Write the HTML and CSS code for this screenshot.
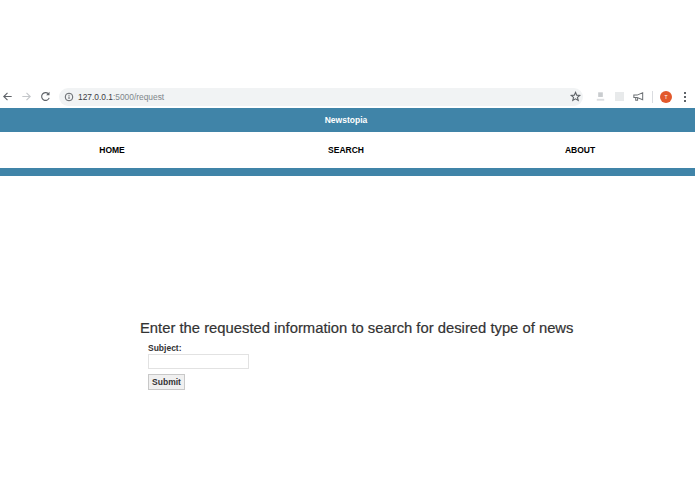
FILE: index.html
```html
<!DOCTYPE html>
<html lang="en">
<head>
<meta charset="UTF-8">
<meta name="viewport" content="width=device-width, initial-scale=1.0">
<title>Newstopia</title>
<link rel="stylesheet" href="styles.css">
</head>
<body>
<!-- browser toolbar -->
<div class="toolbar">
    <svg class="tool-icon" viewBox="0 0 14 14"><path d="M11.500 7H3M7 3L3 7l4 4" fill="none" stroke="#5f6368" stroke-width="1.200"/></svg>
    <svg class="tool-icon" viewBox="0 0 14 14"><path d="M2.500 7H11M7 3l4 4-4 4" fill="none" stroke="#c4c7ca" stroke-width="1.200"/></svg>
    <svg class="tool-icon" viewBox="0 0 14 14"><path d="M11 8.500A4.200 4.200 0 1 1 10 4" fill="none" stroke="#5f6368" stroke-width="1.200"/><path d="M11.300 2v3.600H7.700z" fill="#5f6368"/></svg>
    <div class="address-bar">
        <svg class="info-icon" viewBox="0 0 12 12"><circle cx="6" cy="6" r="3.800" fill="none" stroke="#5f6368" stroke-width="1"/><path d="M6 5.500v2.500M6 3.800v1" stroke="#5f6368" stroke-width="1"/></svg>
        <span class="url"><span class="url-host">127.0.0.1</span>:5000/request</span>
        <svg class="star-icon" viewBox="0 0 14 14"><path d="M7 2.500l1.300 3 3.300.3-2.500 2.200.8 3.200L7 9.500l-2.900 1.700.8-3.200-2.500-2.200 3.300-.3z" fill="none" stroke="#5f6368" stroke-width="1.200"/></svg>
    </div>
    <div class="extensions">
        <svg class="ext-icon" viewBox="0 0 14 14"><path d="M4.500 2.500h5v5h-5z" fill="#c9cccf"/><path d="M3 9.500h8v2H3z" fill="#dcdee0"/></svg>
        <span class="ext-square"></span>
        <svg class="ext-icon" viewBox="0 0 14 14"><path d="M2 5.500h3.500l6-2.500v7.500l-6-2.500H2zM4 8v3h2V8.500" fill="none" stroke="#6d7175" stroke-width="1.100"/></svg>
        <span class="divider"></span>
        <span class="avatar">T</span>
        <span class="kebab"><i></i><i></i><i></i></span>
    </div>
</div>

<header class="site-title">Newstopia</header>
<nav class="main-nav">
    <a href="#">HOME</a>
    <a href="#">SEARCH</a>
    <a href="#">ABOUT</a>
</nav>
<div class="nav-strip"></div>

<div class="content">
    <h2>Enter the requested information to search for desired type of news</h2>
    <form class="request-form" onsubmit="return false">
        <label for="subject">Subject:</label>
        <input type="text" id="subject">
        <input type="submit" value="Submit" class="submit-btn">
    </form>
</div>
</body>
</html>
```

FILE: styles.css
```css
body {
    margin: 0;
    padding-top: 85px;
    background-color: white;
    font-family: "Liberation Sans", Arial, sans-serif;
    color: #333333;
}
.toolbar {
    display: flex;
    align-items: center;
    height: 23px;
    padding-left: 1px;
}
.tool-icon {
    width: 13px;
    height: 13px;
    margin-right: 6px;
}
.address-bar {
    display: flex;
    align-items: center;
    flex: 1;
    height: 18px;
    margin-left: 1px;
    padding: 0 1px 0 4px;
    border-radius: 9px;
    background-color: #f1f3f4;
}
.info-icon {
    width: 12px;
    height: 12px;
    margin-right: 3px;
}
.url {
    flex: 1;
    font-size: 8.400px;
    color: #80868b;
}
.url-host {
    color: #3c4043;
}
.star-icon {
    width: 13px;
    height: 13px;
}
.extensions {
    display: flex;
    align-items: center;
    width: 112px;
    padding-left: 11px;
    box-sizing: border-box;
}
.ext-icon {
    width: 13px;
    height: 13px;
}
.ext-square {
    width: 9px;
    height: 9px;
    margin: 0 8px;
    background-color: #e8eaeb;
}
.divider {
    width: 1px;
    height: 12px;
    margin: 0 7px;
    background-color: #dadce0;
}
.avatar {
    width: 12px;
    height: 12px;
    border-radius: 50%;
    background-color: #e2592c;
    color: white;
    font-size: 5px;
    line-height: 12px;
    text-align: center;
}
.kebab {
    display: flex;
    flex-direction: column;
    gap: 2px;
    margin-left: 12px;
}
.kebab i {
    width: 2px;
    height: 2px;
    background-color: #5f6368;
}
.site-title {
    height: 24px;
    padding-right: 3px;
    background-color: #4084a8;
    color: white;
    font-size: 8.500px;
    font-weight: bold;
    line-height: 24px;
    text-align: center;
}
.main-nav {
    display: grid;
    grid-template-columns: repeat(3, 234px);
    justify-content: center;
    align-items: center;
    height: 36px;
    padding-right: 3px;
    text-align: center;
}
.main-nav a {
    color: black;
    font-size: 8.500px;
    font-weight: bold;
    text-decoration: none;
}
.nav-strip {
    height: 8px;
    background-color: #4084a8;
}
.content {
    padding: 143px 0 0 140px;
}
.content h2 {
    margin: 0 0 6px;
    font-size: 14.800px;
    font-weight: normal;
    line-height: 18px;
    -webkit-text-stroke: 0.2px #333333;
}
.request-form {
    display: flex;
    flex-direction: column;
    align-items: flex-start;
    padding-left: 8px;
}
.request-form label {
    font-size: 8.500px;
    font-weight: bold;
    line-height: 11px;
}
.request-form input[type="text"] {
    width: 99px;
    height: 13px;
    padding: 0;
    margin-bottom: 5px;
    border: 1px solid #e2e2e2;
    box-sizing: content-box;
    outline: none;
}
.submit-btn {
    width: 35px;
    height: 14px;
    box-sizing: content-box;
    padding: 0;
    border: 1px solid #c8c8c8;
    background-color: #f0f0f0;
    color: #333333;
    font-family: "Liberation Sans", Arial, sans-serif;
    font-size: 8.500px;
    font-weight: bold;
}
```
